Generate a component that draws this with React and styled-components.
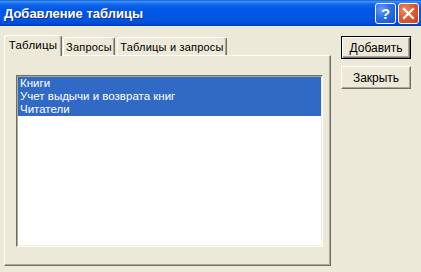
import React from 'react';
import styled, { createGlobalStyle } from 'styled-components';

const Global = createGlobalStyle`
  html, body { margin: 0; padding: 0; background: #ece9d8; }
  body { font-family: "Liberation Sans", Tahoma, Arial, sans-serif; font-size: 11px; color: #000; }
  * { box-sizing: border-box; }
`;

const Window = styled.div`
  width: 421px;
  height: 272px;
  display: flex;
  flex-direction: column;
  background: #ece9d8;
  overflow: hidden;
`;

const TitleBar = styled.div`
  height: 26px;
  flex: none;
  display: flex;
  align-items: center;
  gap: 2px;
  padding: 0 2px 0 4px;
  background: linear-gradient(to bottom, #0b5fd9 0%, #3d8ff7 6%, #1467ea 16%, #0058e8 35%, #0055e4 75%, #004bd6 90%, #0040c2 100%);
`;

const Title = styled.div`
  flex: 1;
  color: #fff;
  font-weight: bold;
  font-size: 13px;
  text-shadow: 1px 1px #0c2f8f;
  padding-top: 1px;
`;

const CapButton = styled.div`
  width: 21px;
  height: 21px;
  border: 1px solid #fff;
  border-radius: 3px;
  display: flex;
  align-items: center;
  justify-content: center;
  color: #fff;
  font-weight: bold;
  font-size: 15px;
  background: ${p => p.$close
    ? 'radial-gradient(circle at 30% 30%, #f08a66 0%, #e25a2f 45%, #c8401a 100%)'
    : 'radial-gradient(circle at 30% 30%, #6a9cf8 0%, #2b6de8 45%, #1550d6 100%)'};
`;

const Body = styled.div`
  flex: 1;
  display: flex;
  gap: 10px;
  padding: 9px 0 0 4px;
`;

const LeftCol = styled.div`
  width: 327px;
  display: flex;
  flex-direction: column;
`;

const TabStrip = styled.div`
  height: 20px;
  display: flex;
  align-items: flex-end;
  position: relative;
  z-index: 1;
`;

const Tab = styled.div`
  width: ${p => p.$w}px;
  height: ${p => (p.$active ? 21 : 18)}px;
  margin-left: ${p => p.$ml || 0}px;
  margin-bottom: ${p => (p.$active ? -1 : 0)}px;
  background: #ece9d8;
  border-top: 1px solid #fff;
  border-left: 1px solid #fff;
  border-right: 1px solid #716f64;
  box-shadow: inset -1px 0 #aca899;
  border-radius: 3px 3px 0 0;
  display: flex;
  align-items: ${p => (p.$active ? 'flex-start' : 'center')};
  justify-content: center;
  padding-top: ${p => (p.$active ? 3 : 0)}px;
  font-size: ${p => (p.$active ? 11.5 : 11)}px;
  letter-spacing: 0.2px;
  white-space: nowrap;
`;

const Panel = styled.div`
  height: 211px;
  border-top: 1px solid #fff;
  border-left: 1px solid #fff;
  border-right: 1px solid #716f64;
  border-bottom: 1px solid #716f64;
  box-shadow: inset -1px -1px #aca899;
  padding: 19px 7px 18px 11px;
  display: flex;
`;

const ListBox = styled.div`
  flex: 1;
  background: #fff;
  border-top: 1px solid #716f64;
  border-left: 1px solid #716f64;
  border-right: 1px solid #fff;
  border-bottom: 1px solid #fff;
  box-shadow: inset 1px 1px #aca899, inset -1px -1px #f1efe2;
  padding: 1px;
  display: flex;
  flex-direction: column;
`;

const Item = styled.div`
  height: 13px;
  line-height: 13px;
  padding-left: 2px;
  font-size: 11.5px;
  white-space: nowrap;
  background: ${p => (p.$selected ? '#316ac5' : 'transparent')};
  color: ${p => (p.$selected ? '#fff' : '#000')};
`;

const RightCol = styled.div`
  display: flex;
  flex-direction: column;
  gap: 7px;
  padding-top: 1px;
`;

const Button = styled.div`
  width: 70px;
  height: 23px;
  display: flex;
  align-items: center;
  justify-content: center;
  font-size: 12px;
  background: #ece9d8;
  border-top: 1px solid ${p => (p.$default ? '#000' : '#fff')};
  border-left: 1px solid ${p => (p.$default ? '#000' : '#fff')};
  border-right: 1px solid ${p => (p.$default ? '#000' : '#716f64')};
  border-bottom: 1px solid ${p => (p.$default ? '#000' : '#716f64')};
  box-shadow: ${p => (p.$default
    ? 'inset 1px 1px #fff, inset -1px -1px #716f64, inset -2px -2px #aca899'
    : 'inset -1px -1px #aca899')};
`;

const items = ['Книги', 'Учет выдычи и возврата книг', 'Читатели'];

export default function App() {
  return (
    <Window>
      <Global />
      <TitleBar>
        <Title>Добавление таблицы</Title>
        <CapButton>?</CapButton>
        <CapButton $close>
          <svg width="13" height="13" viewBox="0 0 13 13">
            <path d="M2 2 L11 11 M11 2 L2 11" stroke="#fff" strokeWidth="2.2" strokeLinecap="square" />
          </svg>
        </CapButton>
      </TitleBar>
      <Body>
        <LeftCol>
          <TabStrip>
            <Tab $active $w={58}>Таблицы</Tab>
            <Tab $w={52} $ml={1}>Запросы</Tab>
            <Tab $w={110} $ml={2}>Таблицы и запросы</Tab>
          </TabStrip>
          <Panel>
            <ListBox>
              {items.map(t => (
                <Item key={t} $selected>{t}</Item>
              ))}
            </ListBox>
          </Panel>
        </LeftCol>
        <RightCol>
          <Button $default>Добавить</Button>
          <Button>Закрыть</Button>
        </RightCol>
      </Body>
    </Window>
  );
}
